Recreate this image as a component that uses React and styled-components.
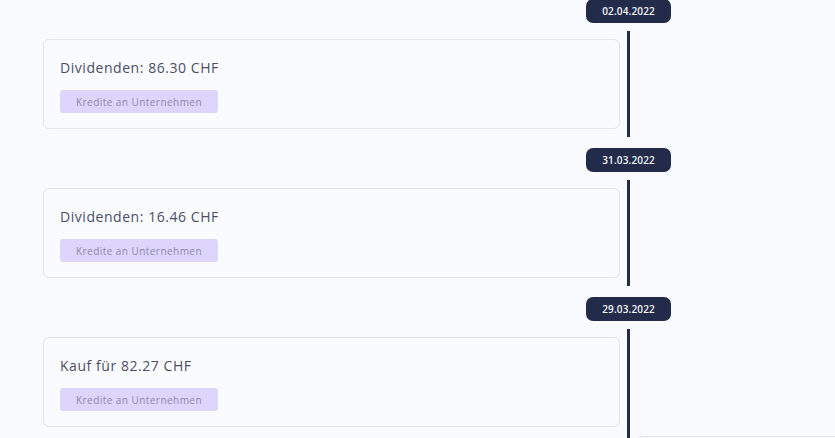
import React from "react";
import styled, { createGlobalStyle } from "styled-components";

const GlobalStyle = createGlobalStyle`
  html, body {
    margin: 0;
    padding: 0;
    background: #f9fafe;
  }
  body {
    font-family: "Open Sans", "Noto Sans", sans-serif;
    overflow: hidden;
  }
`;

const Page = styled.main`
  width: 835px;
  height: 438px;
  overflow: hidden;
  background: #f9fafe;
  padding-top: 0.02px;
`;

const Timeline = styled.div`
  margin-top: -1px;
  padding-left: 43px;
  display: flex;
  flex-direction: column;
`;

const Row = styled.div`
  display: grid;
  grid-template-columns: 577px 17px 1fr;
`;

const BadgeRow = styled(Row)`
  height: 24px;
  margin-bottom: 8px;
`;

const BadgeCell = styled.div`
  grid-column: 2;
  display: flex;
  justify-content: center;
  align-items: center;
`;

const DateBadge = styled.span`
  flex: none;
  display: inline-flex;
  align-items: center;
  justify-content: center;
  height: 24px;
  padding: 0 16px;
  border-radius: 7px;
  background: #222b4a;
  color: #f4f5f9;
  font-size: 10px;
  font-weight: 600;
  letter-spacing: 0.15px;
  white-space: nowrap;
`;

const ContentRow = styled(Row)`
  margin-bottom: ${(p) => (p.$last ? "0" : "11px")};
`;

const LineCell = styled.div`
  grid-column: 2;
  display: flex;
  justify-content: center;
`;

const Line = styled.div`
  width: 3px;
  background: #222b4a;
`;

const Card = styled.article`
  grid-column: 1;
  margin: 8px 0;
  height: 90px;
  box-sizing: border-box;
  border: 1px solid #e3e5ec;
  border-radius: 6px;
  background: #fafbfe;
  padding: 17px 16px 0;
  display: flex;
  flex-direction: column;
  align-items: flex-start;
`;

const Title = styled.h3`
  margin: 0;
  font-size: 14px;
  line-height: 21px;
  font-weight: 400;
  letter-spacing: 0.55px;
  color: #4a4e66;
`;

const Tag = styled.span`
  margin-top: 12px;
  width: 158px;
  height: 23px;
  box-sizing: border-box;
  border-radius: 3px;
  background: #ddd5fc;
  color: #8d87aa;
  font-size: 10px;
  display: flex;
  align-items: center;
  justify-content: center;
  letter-spacing: 0.45px;
`;

const TailRow = styled(Row)`
  height: 20px;
`;

const SideCard = styled.div`
  grid-column: 3;
  margin-top: 1px;
  height: 40px;
  border: 1px solid #dde4ee;
  border-right: none;
  border-radius: 6px 0 0 0;
  background: #fafbfe;
`;

const entries = [
  { date: "02.04.2022", title: "Dividenden: 86.30 CHF", tag: "Kredite an Unternehmen" },
  { date: "31.03.2022", title: "Dividenden: 16.46 CHF", tag: "Kredite an Unternehmen" },
  { date: "29.03.2022", title: "Kauf für 82.27 CHF", tag: "Kredite an Unternehmen" },
];

export default function App() {
  return (
    <Page>
      <GlobalStyle />
      <Timeline>
        {entries.map((e, i) => (
          <React.Fragment key={e.date}>
            <BadgeRow>
              <BadgeCell>
                <DateBadge>{e.date}</DateBadge>
              </BadgeCell>
            </BadgeRow>
            <ContentRow $last={i === entries.length - 1}>
              <Card>
                <Title>{e.title}</Title>
                <Tag>{e.tag}</Tag>
              </Card>
              <LineCell>
                <Line />
              </LineCell>
            </ContentRow>
          </React.Fragment>
        ))}
        <TailRow>
          <LineCell>
            <Line />
          </LineCell>
          <SideCard />
        </TailRow>
      </Timeline>
    </Page>
  );
}
